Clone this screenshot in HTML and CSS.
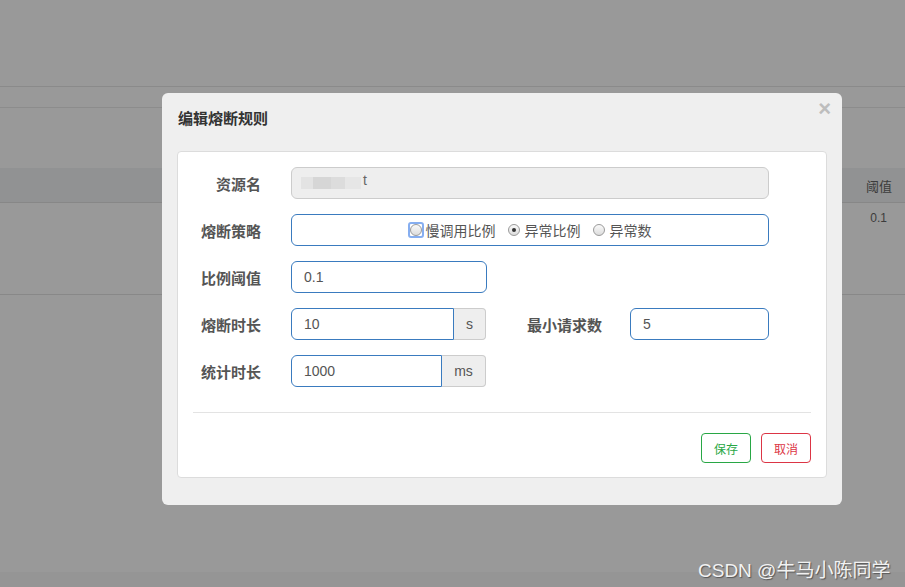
FILE: index.html
```html
<!DOCTYPE html>
<html lang="zh-CN">
<head>
<meta charset="utf-8">
<title>编辑熔断规则</title>
<link rel="stylesheet" href="styles.css">
</head>
<body>
<div class="page">
  <div class="topbar"></div>
  <div class="tabs"></div>
  <div class="gap"></div>
  <div class="thead"><span class="th">阈值</span></div>
  <div class="trow"><span class="td">0.1</span></div>
  <div class="rest"></div>
  <div class="bottom"></div>
</div>

<div class="modal">
  <div class="modal-header">
    <h4 class="modal-title">编辑熔断规则</h4>
    <span class="close">×</span>
  </div>
  <div class="panel">
    <div class="row">
      <label class="label">资源名</label>
      <div class="input readonly wide">
        <span class="blur b1"></span><span class="blur b2"></span><span class="blur b3"></span><span class="blur b4"></span><span class="tail">t</span>
      </div>
    </div>
    <div class="row">
      <label class="label">熔断策略</label>
      <div class="input wide radios">
        <span class="radio focus"><span class="dot"></span></span><span class="rtext">慢调用比例</span>
        <span class="radio checked"><span class="dot"></span></span><span class="rtext">异常比例</span>
        <span class="radio"><span class="dot"></span></span><span class="rtext">异常数</span>
      </div>
    </div>
    <div class="row">
      <label class="label">比例阈值</label>
      <div class="input w196">0.1</div>
    </div>
    <div class="row">
      <label class="label">熔断时长</label>
      <div class="group">
        <div class="input grp w163">10</div><span class="addon w32">s</span>
      </div>
      <label class="label label2">最小请求数</label>
      <div class="input w139">5</div>
    </div>
    <div class="row">
      <label class="label">统计时长</label>
      <div class="group">
        <div class="input grp w151">1000</div><span class="addon w44">ms</span>
      </div>
    </div>
    <div class="divider"></div>
    <div class="actions">
      <button class="btn save">保存</button>
      <button class="btn cancel">取消</button>
    </div>
  </div>
</div>

<div class="watermark">CSDN @牛马小陈同学</div>
</body>
</html>
```
FILE: styles.css
```css
* { box-sizing: border-box; }
html, body { margin: 0; padding: 0; }
body {
  width: 905px;
  height: 587px;
  overflow: hidden;
  background: #999999;
  font-family: "Liberation Sans", "Noto Sans CJK SC", sans-serif;
  position: relative;
}
.page { display: flex; flex-direction: column; height: 587px; }
.topbar { height: 87px; border-bottom: 1px solid #8a8a8a; flex: none; }
.tabs { height: 21px; border-bottom: 1px solid #8c8c8c; flex: none; }
.gap { height: 60px; flex: none; }
.thead {
  height: 35px; flex: none;
  background: #919293;
  border-bottom: 1px solid #878787;
  display: flex; justify-content: flex-end; align-items: center;
  padding-right: 13px;
}
.th { font-size: 13px; color: #3c3c3c; }
.trow {
  height: 92px; flex: none;
  border-bottom: 1px solid #888888;
  display: flex; justify-content: flex-end; align-items: flex-start;
  padding-right: 18px; padding-top: 8px;
}
.td { font-size: 12px; color: #3c3c3c; }
.rest { flex: 1; }
.bottom { height: 15px; flex: none; background: #959595; }

.modal {
  position: absolute;
  left: 162px; top: 93px;
  width: 680px; height: 412px;
  background: #efefef;
  border-radius: 6px;
}
.modal-header {
  position: relative;
  padding: 16px 16px 22px 16px;
}
.modal-title {
  margin: 0;
  font-size: 15px;
  line-height: 20px;
  font-weight: bold;
  color: #333;
}
.close {
  position: absolute;
  right: 11px; top: 4px;
  font-size: 22px;
  font-weight: bold;
  color: #bdbdbd;
  line-height: 24px;
}
.panel {
  margin: 0 15px;
  height: 327px;
  background: #fff;
  border: 1px solid #dcdcdc;
  border-radius: 4px;
  padding: 15px 0 0 0;
}
.row {
  display: flex;
  align-items: center;
  height: 32px;
  margin-bottom: 15px;
}
.label {
  width: 83px;
  flex: none;
  text-align: right;
  font-size: 15px;
  font-weight: bold;
  color: #555;
  margin-right: 30px;
}
.label2 { width: 99px; margin-left: 17px; margin-right: 28px; }
.input {
  height: 32px;
  border: 1px solid #3a7bbf;
  border-radius: 6px;
  padding: 0 12px;
  font-size: 14px;
  color: #555;
  display: flex;
  align-items: center;
  flex: none;
  background: #fff;
}
.wide { width: 478px; }
.w196 { width: 196px; }
.w163 { width: 163px; }
.w151 { width: 151px; }
.w139 { width: 139px; }
.readonly {
  background: #eeeeee;
  border-color: #cccccc;
  padding-left: 9px;
}
.blur { display: inline-block; height: 12px; margin-top: 0; }
.b1 { width: 12px; background: #e3e3e3; }
.b2 { width: 18px; background: #d6d6d6; }
.b3 { width: 14px; background: #dcdcdc; }
.b4 { width: 16px; background: #e6e6e6; }
.tail { margin-left: 2px; color: #666; position: relative; top: -3px; }
.radios { justify-content: center; padding: 0; padding-left: 1px; }
.radio {
  width: 12px; height: 12px;
  border-radius: 50%;
  border: 1px solid #9a9a9a;
  background: linear-gradient(#fafafa, #dcdcdc);
  display: inline-flex; align-items: center; justify-content: center;
  margin-right: 5px;
  position: relative;
}
.radio.focus { margin-right: 4px; }
.radio.focus::after {
  content: "";
  position: absolute;
  left: -3px; top: -3px; right: -3px; bottom: -3px;
  border: 2px solid #86aef0;
  border-radius: 3px;
}
.radio .dot { width: 4px; height: 4px; border-radius: 50%; }
.radio.checked .dot { background: #333; }
.rtext { font-size: 14px; color: #555; margin-right: 12px; }
.rtext:last-child { margin-right: 0; }
.group { display: flex; flex: none; }
.grp { border-top-right-radius: 0; border-bottom-right-radius: 0; }
.addon {
  height: 32px;
  background: #eeeeee;
  border: 1px solid #cccccc;
  border-left: none;
  border-radius: 0 4px 4px 0;
  font-size: 14px;
  color: #555;
  display: flex; align-items: center; justify-content: center;
}
.w32 { width: 32px; }
.w44 { width: 44px; }
.divider {
  margin: 25px 15px 0 15px;
  border-top: 1px solid #e3e3e3;
}
.actions {
  display: flex;
  justify-content: flex-end;
  gap: 10px;
  padding: 20px 15px 0 0;
}
.btn {
  width: 50px; height: 30px;
  background: #fff;
  border-radius: 4px;
  font-family: "Liberation Sans", "Noto Sans CJK SC", sans-serif;
  font-size: 12px;
  padding: 0;
}
.save { border: 1px solid #28a745; color: #28a745; }
.cancel { border: 1px solid #dc3545; color: #dc3545; }

.watermark {
  position: absolute;
  left: 698px; top: 555px;
  font-size: 19px;
  color: #f2f2f2;
  text-shadow: 1px 1px 1px #555;
  white-space: nowrap;
}
```
